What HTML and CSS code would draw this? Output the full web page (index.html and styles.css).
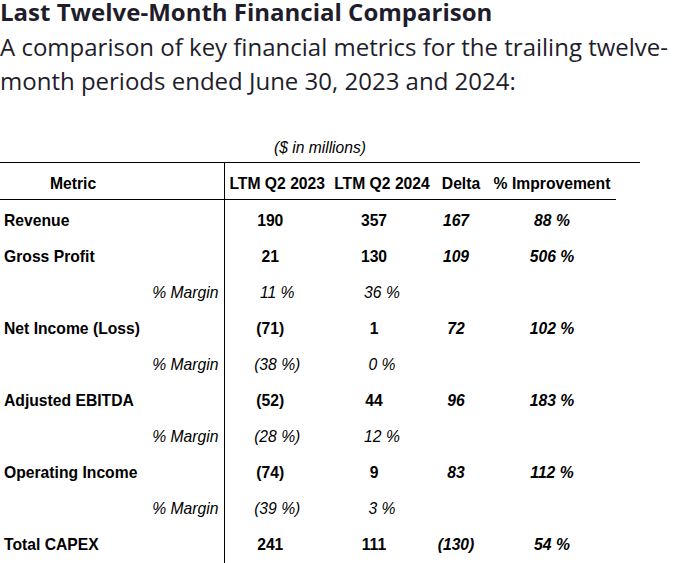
FILE: index.html
```html
<!DOCTYPE html>
<html lang="en">
<head>
<meta charset="utf-8">
<title>Last Twelve-Month Financial Comparison</title>
<link rel="stylesheet" href="styles.css">
</head>
<body>
<h2 class="title">Last Twelve-Month Financial Comparison</h2>
<p class="subtitle">A comparison of key financial metrics for the trailing twelve-month periods ended June 30, 2023 and 2024:</p>
<div class="caption">($ in millions)</div>
<div class="table-wrap">
<table class="fin">
<colgroup>
<col class="c-metric"><col class="c-y1"><col class="c-y2"><col class="c-delta"><col class="c-imp">
</colgroup>
<thead>
<tr>
<th class="h-metric">Metric</th>
<th>LTM Q2 2023</th>
<th>LTM Q2 2024</th>
<th>Delta</th>
<th>% Improvement</th>
</tr>
</thead>
<tbody>
<tr class="first">
<td class="label">Revenue</td><td class="v1">190</td><td class="v2">357</td><td class="d">167</td><td class="imp">88 %</td>
</tr>
<tr>
<td class="label">Gross Profit</td><td class="v1">21</td><td class="v2">130</td><td class="d">109</td><td class="imp">506 %</td>
</tr>
<tr class="margin">
<td class="label">% Margin</td><td>11 %</td><td>36 %</td><td></td><td></td>
</tr>
<tr>
<td class="label">Net Income (Loss)</td><td class="v1">(71)</td><td class="v2">1</td><td class="d">72</td><td class="imp">102 %</td>
</tr>
<tr class="margin">
<td class="label">% Margin</td><td>(38 %)</td><td>0 %</td><td></td><td></td>
</tr>
<tr>
<td class="label">Adjusted EBITDA</td><td class="v1">(52)</td><td class="v2">44</td><td class="d">96</td><td class="imp">183 %</td>
</tr>
<tr class="margin">
<td class="label">% Margin</td><td>(28 %)</td><td>12 %</td><td></td><td></td>
</tr>
<tr>
<td class="label">Operating Income</td><td class="v1">(74)</td><td class="v2">9</td><td class="d">83</td><td class="imp">112 %</td>
</tr>
<tr class="margin">
<td class="label">% Margin</td><td>(39 %)</td><td>3 %</td><td></td><td></td>
</tr>
<tr>
<td class="label">Total CAPEX</td><td class="v1">241</td><td class="v2">111</td><td class="d">(130)</td><td class="imp">54 %</td>
</tr>
</tbody>
</table>
</div>
</body>
</html>
```

FILE: styles.css
```css
html, body {
  margin: 0;
  padding: 0;
  background: #ffffff;
}

body {
  font-family: "Open Sans", "Liberation Sans", sans-serif;
  color: #1f1d2b;
}

.title {
  margin: 0;
  font-size: 24px;
  line-height: 24px;
  font-weight: 700;
}

.subtitle {
  margin: 6px 0 0 0;
  font-size: 24px;
  line-height: 34px;
  font-weight: 400;
}

.caption {
  width: 640px;
  margin-top: 41px;
  margin-bottom: 5px;
  text-align: center;
  font-family: "Liberation Sans", Arial, sans-serif;
  font-style: italic;
  font-size: 15.6px;
  line-height: 18px;
  color: #000;
}

.table-wrap {
  width: 640px;
  border-top: 1px solid #000;
}

.fin {
  width: 616px;
  table-layout: fixed;
  border-collapse: collapse;
  border-spacing: 0;
  font-family: "Liberation Sans", Arial, sans-serif;
  font-size: 15.7px;
  line-height: 18px;
  color: #000;
}

.c-metric { width: 224px; }
.c-y1 { width: 106px; }
.c-y2 { width: 104px; }
.c-delta { width: 54px; }
.c-imp { width: 128px; }

.fin th {
  padding: 12px 0 6px 0;
  font-weight: 700;
  text-align: center;
  white-space: nowrap;
  border-bottom: 1px solid #000;
}

.fin th.h-metric {
  text-align: left;
  padding-left: 50px;
}

.fin th:first-child,
.fin td:first-child {
  border-right: 1px solid #000;
}

.fin td {
  height: 18px;
  padding: 9px 0;
  text-align: center;
  font-weight: 700;
  white-space: nowrap;
}

.fin tr.first td {
  padding-top: 12px;
}

.fin td.label {
  text-align: left;
  padding-left: 4px;
}

.fin td.v1 { padding-right: 14px; }
.fin td.v2 { padding-right: 16px; }
.fin td.d { padding-right: 10px; font-style: italic; }
.fin td.imp { font-style: italic; }

.fin tr.margin td {
  font-weight: 400;
  font-style: italic;
}

.fin tr.margin td.label {
  text-align: right;
  padding-left: 0;
  padding-right: 5px;
}
```
